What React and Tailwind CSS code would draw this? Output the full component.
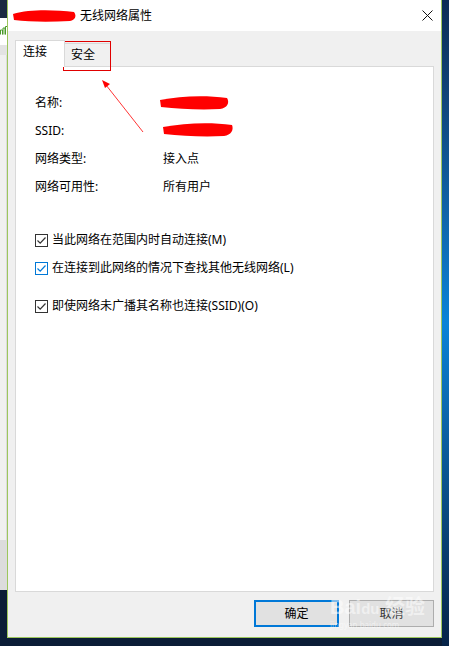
import React from 'react';

const font = { fontFamily: '"Noto Sans", "Noto Sans CJK SC", sans-serif' };

function Check({ focus }) {
  const c = focus ? '#0078d7' : '#333333';
  return (
    <span
      className={`flex h-[13px] w-[13px] shrink-0 items-center justify-center border bg-white ${focus ? 'border-[#0078d7]' : 'border-[#333333]'}`}
    >
      <svg width="11" height="11" viewBox="0 0 11 11">
        <path d="M1.5 5.5 L4.2 8.2 L9.5 2.5" fill="none" stroke={c} strokeWidth="1.2" />
      </svg>
    </span>
  );
}

function Row({ label, value }) {
  return (
    <div className="flex h-[28px] items-center">
      <span className="w-[128px]">{label}</span>
      <span>{value}</span>
    </div>
  );
}

function CheckRow({ text, focus }) {
  return (
    <div className="flex items-center gap-[4px]">
      <Check focus={focus} />
      <span>{text}</span>
    </div>
  );
}

export default function App() {
  return (
    <div className="relative flex h-[646px] w-[449px] overflow-hidden bg-[#0b1d36] text-[12px] leading-[16px] text-[#000]" style={font}>
      {/* left background strip: other window behind */}
      <div className="flex w-[7px] flex-col">
        <div className="h-[18px] bg-[#1b2a40]" />
        <div className="relative h-[27px] bg-white">
          <svg className="absolute left-0 top-[8px]" width="7" height="9" viewBox="0 0 7 9">
            <path d="M0.5 8.5 V4 H2.5 V8.5 M3 8.5 V2 H5 V8.5 M5.5 8.5 V0.5 H7" fill="none" stroke="#4a9a2a" strokeWidth="1" />
          </svg>
        </div>
        <div className="h-[10px] bg-[#e3e3e3]" />
        <div className="h-[485px] border-r border-[#dadada] bg-[#f0f0f0]" />
        <div className="h-[50px] bg-[#dcdcdc]" />
        <div className="flex-1 bg-[#0b1d36]" />
      </div>

      {/* dialog window */}
      <div className="flex w-[435px] flex-col">
        <div className="flex h-[638px] flex-col border-x border-b border-[#9cc65c] bg-[#f0f0f0]">
          <div className="relative flex h-[31px] items-center bg-white pl-[72px]">
            <span className="text-[12px]">无线网络属性</span>
            <svg className="absolute right-[8px] top-[10px]" width="11" height="11" viewBox="0 0 11 11">
              <path d="M0.5 0.5 L10.5 10.5 M10.5 0.5 L0.5 10.5" stroke="#111" strokeWidth="1" />
            </svg>
          </div>

          <div className="flex flex-1 flex-col px-[7px] pt-[9px]">
            <div className="flex h-[26px] items-end">
              <div className="relative z-10 -mb-px flex h-[27px] w-[50px] items-start border border-b-0 border-[#d9d9d9] bg-white pl-[7px] pt-[3px]">
                连接
              </div>
              <div className="flex h-[23px] w-[46px] items-start border border-l-0 border-b-0 border-[#d9d9d9] bg-[#f0f0f0] pl-[6px] pt-[3px]">
                安全
              </div>
            </div>
            <div className="flex h-[526px] flex-col border border-[#d9d9d9] bg-white pl-[19px] pt-[22px]">
              <Row label="名称:" value="" />
              <Row label="SSID:" value="" />
              <Row label="网络类型:" value="接入点" />
              <Row label="网络可用性:" value="所有用户" />
              <div className="mt-[31px] flex flex-col">
                <CheckRow text="当此网络在范围内时自动连接(M)" />
                <div className="h-[12px]" />
                <CheckRow text="在连接到此网络的情况下查找其他无线网络(L)" focus />
                <div className="h-[22px]" />
                <CheckRow text="即使网络未广播其名称也连接(SSID)(O)" />
              </div>
            </div>
            <div className="flex justify-end gap-[10px] pt-[8px]">
              <button className="flex h-[27px] w-[85px] items-center justify-center border-2 border-[#0078d7] bg-[#e1e1e1]">
                确定
              </button>
              <button className="flex h-[27px] w-[85px] items-center justify-center border border-[#adadad] bg-[#e1e1e1] text-[#333]">
                取消
              </button>
            </div>
          </div>
        </div>
        <div className="flex-1 bg-[#0b1d36]" />
      </div>

      {/* right desktop strip */}
      <div className="w-[7px] bg-linear-to-b from-[#0d2c55] via-[#0a83d8] to-[#062348]" />

      {/* annotations drawn over the screenshot */}
      <svg className="pointer-events-none absolute left-0 top-0" width="449" height="646" viewBox="0 0 449 646">
        <path d="M13 14 C30 9 55 10 74 12 C77 16 75 20 70 21 C50 22 30 22 14 20 Z" fill="#ff0000" />
        <path d="M160 100 C180 96 205 95 227 98 C230 103 227 108 220 109 C200 110 180 109 161 107 Z" fill="#ff0000" />
        <path d="M163 127 C185 123 210 122 232 125 C234 130 231 135 224 136 C203 137 183 136 164 134 Z" fill="#ff0000" />
        <rect x="63.5" y="41.5" width="47" height="29" fill="none" stroke="#e00000" strokeWidth="1" />
        <path d="M143 132 L106 85" stroke="#ff0000" strokeWidth="0.8" />
        <path d="M102 80 L110 84 L105 88 Z" fill="#ff0000" />
      </svg>

      {/* watermark */}
      <div className="pointer-events-none absolute left-[330px] top-[596px] flex flex-col items-start text-white/50">
        <span className="text-[20px] font-bold leading-[22px]" style={{ fontFamily: '"Liberation Sans", "Noto Sans CJK SC", sans-serif' }}>Bai<span className="text-[15px]">du</span> 经验</span>
        <span className="text-[8px] leading-[9px]">jingyan.baidu.com</span>
      </div>
    </div>
  );
}
